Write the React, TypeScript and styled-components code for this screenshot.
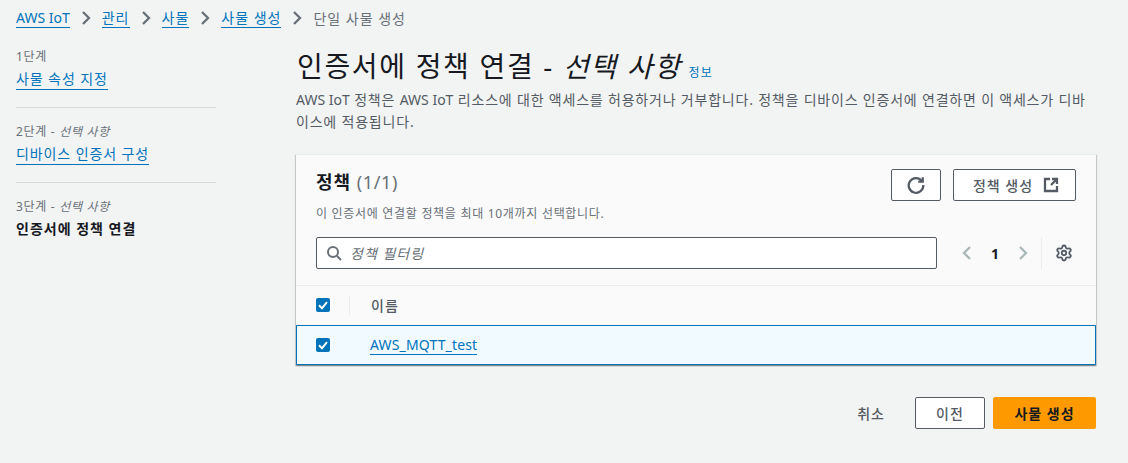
import React from "react";
import styled, {createGlobalStyle} from "styled-components";
import {Settings} from "lucide-react";

const GlobalStyle = createGlobalStyle`
    html, body {
        margin: 0;
        padding: 0;
        background: #f2f3f3;
        font-family: "Noto Sans", "Noto Sans CJK KR", sans-serif;
        color: #16191f;
    }
`;

const Page = styled.div`
    width: 1128px;
    height: 463px;
    overflow: hidden;
    box-sizing: border-box;
    padding: 0 32px 0 16px;
`;

// hangul in the original font runs wider than Noto CJK, so it gets letter-spacing; latin text resets it
const Latin = styled.span`
    letter-spacing: 0;
`;

const Breadcrumbs = styled.nav`
    display: flex;
    align-items: center;
    box-sizing: border-box;
    height: 33px;
    padding-top: 3px;
    font-size: 14px;
    letter-spacing: 1px;
`;

const CrumbLink = styled.a`
    color: #0073bb;
    line-height: 19px;
    border-bottom: 1px solid #0073bb;
`;

const CrumbCurrent = styled.span`
    color: #687078;
    line-height: 19px;
`;

const CrumbArrow = styled.svg`
    width: 16px;
    height: 16px;
    margin: 0 8px;
    fill: none;
    stroke: #687078;
    stroke-width: 2.3;
`;

const Layout = styled.div`
    display: flex;
    gap: 80px;
`;

const Steps = styled.ol`
    list-style: none;
    margin: 0;
    padding: 0;
    width: 200px;
    flex: none;
`;

const Step = styled.li`
    padding: 15px 0 0;
    border-bottom: 1px solid #d5dbdb;
    height: 75px;
    box-sizing: border-box;

    &:last-child {
        border-bottom: none;
    }
`;

const StepLabel = styled.div`
    font-size: 12px;
    line-height: 18px;
    letter-spacing: 0.7px;
    color: #687078;

    em {
        font-style: italic;
    }
`;

const StepLink = styled.a`
    display: inline-block;
    margin-top: 3px;
    font-size: 14px;
    line-height: 20px;
    letter-spacing: 0.9px;
    color: #0073bb;
    border-bottom: 1px solid #0073bb;
`;

const StepCurrent = styled.div`
    margin-top: 3px;
    font-size: 14px;
    line-height: 20px;
    letter-spacing: 1px;
    font-weight: 700;
`;

const Main = styled.main`
    width: 800px;
    flex: none;
`;

const TitleRow = styled.div`
    display: flex;
    align-items: baseline;
    gap: 7px;
    margin-top: 13px;
`;

const Title = styled.h1`
    margin: 0 0 0 1px;
    font-size: 28px;
    line-height: 40px;
    font-weight: 400;
    letter-spacing: 1.67px;

    em {
        font-style: italic;
    }
`;

const InfoLink = styled.a`
    font-size: 12px;
    letter-spacing: 1px;
    color: #0073bb;
`;

const Description = styled.p`
    margin: 3px 0 0;
    font-size: 14px;
    line-height: 22px;
    letter-spacing: 0.8px;
    color: #545b64;
`;

const Card = styled.section`
    margin-top: 21px;
    background: #fafafa;
    border-top: 1px solid #eaeded;
    box-shadow: 0 1px 1px 0 rgba(0, 28, 36, 0.3), 1px 1px 1px 0 rgba(0, 28, 36, 0.15), -1px 1px 1px 0 rgba(0, 28, 36, 0.15);
`;

const CardHeader = styled.div`
    padding: 14px 20px 16px;
    border-bottom: 1px solid #eaeded;
`;

const HeaderTop = styled.div`
    display: flex;
    justify-content: space-between;
`;

const CardTitle = styled.h2`
    margin: 0;
    font-size: 18px;
    line-height: 26px;
    font-weight: 700;
    letter-spacing: 1px;

    span {
        font-weight: 400;
        letter-spacing: 0.6px;
        color: #687078;
    }
`;

const CardSubtitle = styled.p`
    margin: 10px 0 0;
    font-size: 12px;
    line-height: 18px;
    letter-spacing: 0.7px;
    color: #687078;
`;

const HeaderActions = styled.div`
    display: flex;
    gap: 12px;
`;

const OutlineButton = styled.button<{$width: number}>`
    display: inline-flex;
    align-items: center;
    justify-content: center;
    gap: 8px;
    box-sizing: border-box;
    width: ${(props) => props.$width}px;
    height: 32px;
    padding: 0;
    background: #ffffff;
    border: 1px solid #545b64;
    border-radius: 2px;
    font-family: inherit;
    font-size: 14px;
    font-weight: 500;
    letter-spacing: 1px;
    color: #545b64;
`;

const ExternalIcon = styled.svg`
    width: 16px;
    height: 16px;
    margin: 0 -3px 0 2px;
    fill: none;
    stroke: #545b64;
    stroke-width: 2.3;
`;

const ToolRow = styled.div`
    display: flex;
    align-items: center;
    margin-top: 14px;
`;

const FilterBox = styled.div`
    display: flex;
    align-items: center;
    gap: 8px;
    box-sizing: border-box;
    width: 621px;
    height: 32px;
    padding: 0 9px;
    background: #ffffff;
    border: 1px solid #545b64;
    border-radius: 2px;
    font-size: 14px;
    font-style: italic;
    letter-spacing: 1px;
    color: #687078;
`;

const Pager = styled.div`
    display: flex;
    align-items: center;
    margin-left: 22px;
`;

const PagerArrow = styled.svg`
    width: 16px;
    height: 16px;
    fill: none;
    stroke: #aab7b8;
    stroke-width: 2.3;
`;

const PageNumber = styled.span`
    width: 40px;
    text-align: center;
    font-size: 14px;
    font-weight: 700;
`;

const SettingsCell = styled.div`
    display: flex;
    align-items: center;
    height: 32px;
    margin-left: 10px;
    padding-left: 13px;
    border-left: 1px solid #eaeded;
    color: #545b64;
`;

const Row = styled.div<{$selected?: boolean}>`
    display: flex;
    align-items: center;
    box-sizing: border-box;
    height: ${(props) => (props.$selected ? 40 : 39)}px;
    padding: ${(props) => (props.$selected ? "0 0 0 20px" : "0 0 1px 20px")};
    font-size: 14px;
    background: ${(props) => (props.$selected ? "#f1faff" : "transparent")};
    outline: ${(props) => (props.$selected ? "1px solid #0073bb" : "none")};
    outline-offset: -1px;
`;

const Check = styled.span`
    display: inline-flex;
    align-items: center;
    justify-content: center;
    width: 14px;
    height: 14px;
    background: #0073bb;
    border-radius: 2px;
`;

const HeadDivider = styled.span`
    width: 1px;
    height: 20px;
    margin: 0 21px 0 19px;
    background: #eaeded;
`;

const HeadLabel = styled.span`
    font-weight: 500;
    letter-spacing: 1px;
    color: #545b64;
`;

const NameLink = styled.a`
    margin-left: 40px;
    line-height: 19px;
    letter-spacing: 0.15px;
    color: #0073bb;
    border-bottom: 1px solid #0073bb;
`;

const Footer = styled.div`
    display: flex;
    justify-content: flex-end;
    align-items: center;
    gap: 8px;
    margin-top: 32px;
`;

const CancelButton = styled.a`
    margin-right: 22px;
    font-size: 14px;
    font-weight: 500;
    letter-spacing: 1px;
    color: #545b64;
`;

const PrimaryButton = styled.button`
    width: 103px;
    height: 32px;
    padding: 0;
    background: #ff9900;
    border: 1px solid #ff9900;
    border-radius: 2px;
    font-family: inherit;
    font-size: 14px;
    font-weight: 700;
    letter-spacing: 1px;
    color: #16191f;
`;

const Arrow = () => (
    <CrumbArrow viewBox="0 0 16 16"><path d="M5 2l6 6-6 6"/></CrumbArrow>
);

const CheckMark = () => (
    <svg width="14" height="14" viewBox="0 0 14 14" fill="none" stroke="#ffffff" strokeWidth="2">
        <path d="M3 7.2l3 3 5-6"/>
    </svg>
);

const App: React.FC = () => {
    return (
        <Page>
            <GlobalStyle/>
            <Breadcrumbs>
                <CrumbLink><Latin>AWS IoT</Latin></CrumbLink>
                <Arrow/>
                <CrumbLink>관리</CrumbLink>
                <Arrow/>
                <CrumbLink>사물</CrumbLink>
                <Arrow/>
                <CrumbLink>사물 생성</CrumbLink>
                <Arrow/>
                <CrumbCurrent>단일 사물 생성</CrumbCurrent>
            </Breadcrumbs>
            <Layout>
                <Steps>
                    <Step>
                        <StepLabel>1단계</StepLabel>
                        <StepLink>사물 속성 지정</StepLink>
                    </Step>
                    <Step>
                        <StepLabel>2단계 - <em>선택 사항</em></StepLabel>
                        <StepLink>디바이스 인증서 구성</StepLink>
                    </Step>
                    <Step>
                        <StepLabel>3단계 - <em>선택 사항</em></StepLabel>
                        <StepCurrent>인증서에 정책 연결</StepCurrent>
                    </Step>
                </Steps>
                <Main>
                    <TitleRow>
                        <Title>인증서에 정책 연결 - <em>선택 사항</em></Title>
                        <InfoLink>정보</InfoLink>
                    </TitleRow>
                    <Description>
                        <Latin>AWS IoT</Latin> 정책은 <Latin>AWS IoT</Latin> 리소스에 대한 액세스를 허용하거나 거부합니다. 정책을 디바이스 인증서에 연결하면 이 액세스가 디바이스에 적용됩니다.
                    </Description>
                    <Card>
                        <CardHeader>
                            <HeaderTop>
                                <div>
                                    <CardTitle>정책 <span>(1/1)</span></CardTitle>
                                    <CardSubtitle>이 인증서에 연결할 정책을 최대 10개까지 선택합니다.</CardSubtitle>
                                </div>
                                <HeaderActions>
                                    <OutlineButton $width={50}>
                                        <svg width="18" height="18" viewBox="0 0 16 16" fill="none" stroke="#545b64" strokeWidth="2">
                                            <path d="M13.2 4.5A6.5 6.5 0 1 0 14.5 8"/>
                                            <path d="M14 1v4h-4"/>
                                        </svg>
                                    </OutlineButton>
                                    <OutlineButton $width={123}>
                                        정책 생성
                                        <ExternalIcon viewBox="0 0 16 16">
                                            <path d="M7 2H2v12h12V9"/>
                                            <path d="M9 2h5v5M14 2L8 8"/>
                                        </ExternalIcon>
                                    </OutlineButton>
                                </HeaderActions>
                            </HeaderTop>
                            <ToolRow>
                                <FilterBox>
                                    <svg width="16" height="16" viewBox="0 0 16 16" fill="none" stroke="#687078" strokeWidth="2">
                                        <circle cx="7" cy="7" r="5"/>
                                        <path d="M11 11l4 4"/>
                                    </svg>
                                    정책 필터링
                                </FilterBox>
                                <Pager>
                                    <PagerArrow viewBox="0 0 16 16"><path d="M11 2L5 8l6 6"/></PagerArrow>
                                    <PageNumber>1</PageNumber>
                                    <PagerArrow viewBox="0 0 16 16"><path d="M5 2l6 6-6 6"/></PagerArrow>
                                </Pager>
                                <SettingsCell>
                                    <Settings size={18} strokeWidth={2.4}/>
                                </SettingsCell>
                            </ToolRow>
                        </CardHeader>
                        <Row>
                            <Check><CheckMark/></Check>
                            <HeadDivider/>
                            <HeadLabel>이름</HeadLabel>
                        </Row>
                        <Row $selected>
                            <Check><CheckMark/></Check>
                            <NameLink>AWS_MQTT_test</NameLink>
                        </Row>
                    </Card>
                    <Footer>
                        <CancelButton>취소</CancelButton>
                        <OutlineButton $width={70}>이전</OutlineButton>
                        <PrimaryButton>사물 생성</PrimaryButton>
                    </Footer>
                </Main>
            </Layout>
        </Page>
    );
};

export default App;
